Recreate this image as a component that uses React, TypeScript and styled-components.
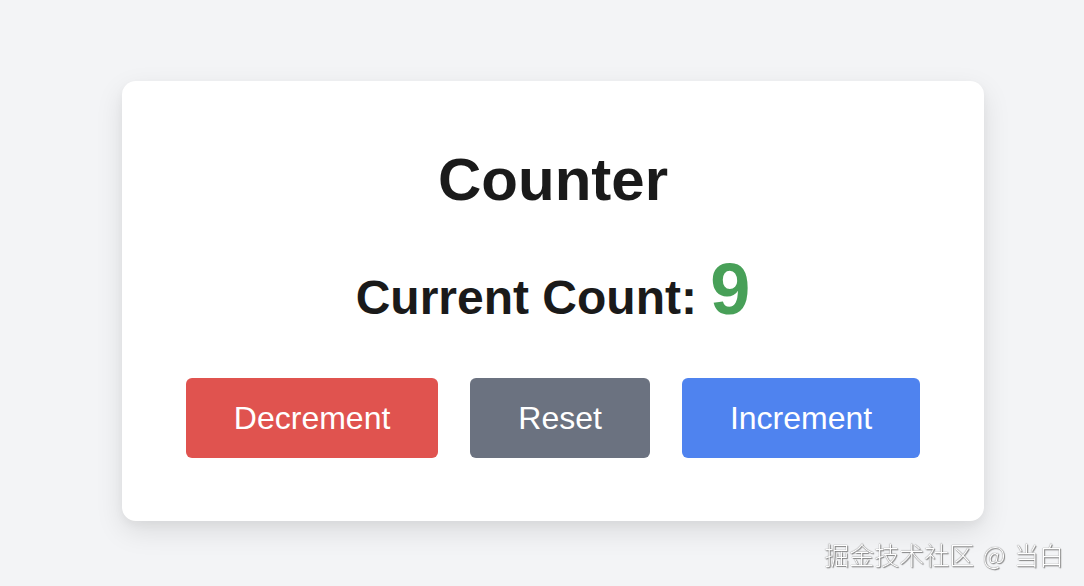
import React, { useState } from "react";
import styled, { createGlobalStyle } from "styled-components";

const GlobalStyle = createGlobalStyle`
  html, body {
    margin: 0;
    padding: 0;
    background: #f3f4f6;
    font-family: "Liberation Sans", Arial, Helvetica, sans-serif;
  }
`;

const Page = styled.main`
  min-height: 100vh;
  box-sizing: border-box;
  padding: 16px 0 0 22px;
  display: flex;
  align-items: center;
  justify-content: center;
`;

const Card = styled.section`
  background: #ffffff;
  border-radius: 14px;
  box-shadow: 0 10px 28px rgba(0, 0, 0, 0.1), 0 4px 10px rgba(0, 0, 0, 0.04);
  padding: 63px 64px;
  display: flex;
  flex-direction: column;
  align-items: center;
`;

const Title = styled.h1`
  margin: 0 0 37px;
  font-size: 60px;
  line-height: 1.2;
  font-weight: 700;
  color: #1a1a1a;
`;

const CountLine = styled.p`
  margin: 0 0 52px;
  font-size: 48px;
  line-height: 1.2;
  font-weight: 700;
  color: #1a1a1a;
`;

const CountValue = styled.span`
  font-size: 72px;
  line-height: 1;
  color: #48a058;
`;

const Actions = styled.div`
  display: flex;
  gap: 32px;
`;

const COLORS = {
  red: "#e0534f",
  gray: "#6b7280",
  blue: "#4f83ef",
};

const ActionButton = styled.button<{ $tone: keyof typeof COLORS }>`
  height: 80px;
  padding: 0 48px;
  border: none;
  border-radius: 6px;
  background: ${(p) => COLORS[p.$tone]};
  color: #ffffff;
  font-family: inherit;
  font-size: 32px;
  cursor: pointer;
`;

const Watermark = styled.div`
  position: fixed;
  right: 20px;
  bottom: 14px;
  font-family: "Noto Sans CJK SC", sans-serif;
  font-weight: 300;
  font-size: 25px;
  word-spacing: 3px;
  color: #ffffff;
  text-shadow: 0 0 1px #444, 1px 1px 1px #888;
  pointer-events: none;
`;

export default function App() {
  const [count, setCount] = useState(9);

  return (
    <Page>
      <GlobalStyle />
      <Card>
        <Title>Counter</Title>
        <CountLine>
          Current Count: <CountValue>{count}</CountValue>
        </CountLine>
        <Actions>
          <ActionButton $tone="red" onClick={() => setCount(count - 1)}>
            Decrement
          </ActionButton>
          <ActionButton $tone="gray" onClick={() => setCount(0)}>
            Reset
          </ActionButton>
          <ActionButton $tone="blue" onClick={() => setCount(count + 1)}>
            Increment
          </ActionButton>
        </Actions>
      </Card>
      <Watermark>掘金技术社区 @ 当白</Watermark>
    </Page>
  );
}
